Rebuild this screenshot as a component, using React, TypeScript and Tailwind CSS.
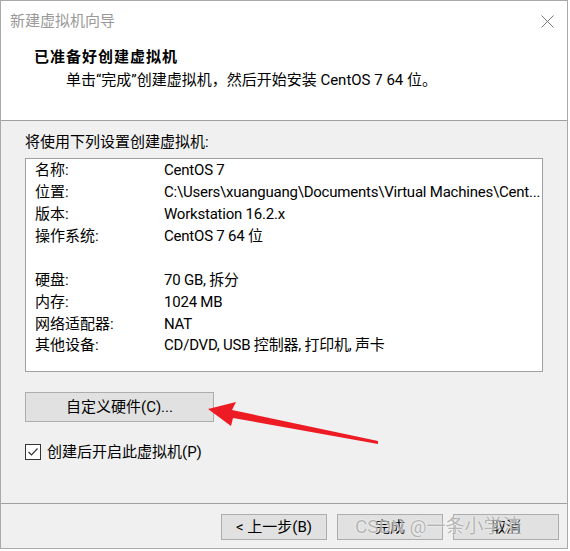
import React from "react";

const rows: [string, string][] = [
  ["名称:", "CentOS 7"],
  ["位置:", "C:\\Users\\xuanguang\\Documents\\Virtual Machines\\Cent..."],
  ["版本:", "Workstation 16.2.x"],
  ["操作系统:", "CentOS 7 64 位"],
  ["", ""],
  ["硬盘:", "70 GB, 拆分"],
  ["内存:", "1024 MB"],
  ["网络适配器:", "NAT"],
  ["其他设备:", "CD/DVD, USB 控制器, 打印机, 声卡"],
];

function WizardButton({ children }: { children: React.ReactNode }) {
  return (
    <button className="w-[106px] h-[26px] bg-[#e1e1e1] border border-[#adadad] text-[15px] leading-none text-black flex items-center justify-center">
      {children}
    </button>
  );
}

export default function App() {
  return (
    <div className="relative w-[570px] h-[551px] bg-white overflow-hidden font-['Roboto','Noto_Sans_CJK_SC',sans-serif] text-black">
      <div className="w-[568px] h-[549px] border border-[#a9a9a9] flex flex-col bg-[#f0f0f0]">
        <div className="bg-white h-[120px] border-b border-[#a0a0a0] flex flex-col">
          <div className="h-[40px] flex items-center justify-between pl-[9px] pr-[13px]">
            <span className="text-[15px] text-[#999999]">新建虚拟机向导</span>
            <svg width="13" height="13" viewBox="0 0 13 13" className="text-[#777]">
              <path d="M0.5 0.5 L12.5 12.5 M12.5 0.5 L0.5 12.5" stroke="currentColor" strokeWidth="1" fill="none" />
            </svg>
          </div>
          <div className="pl-[33px] mt-[5px] text-[15px] font-bold tracking-[1px] leading-[22px]">已准备好创建虚拟机</div>
          <div className="pl-[65px] text-[15px] leading-[22px] mt-[1px]">
            单击“完成”创建虚拟机，然后开始安装 CentOS 7 64 位。
          </div>
        </div>

        <div className="flex-1 px-[24px] flex flex-col">
          <div className="mt-[10px] text-[15px] leading-[22px]">将使用下列设置创建虚拟机:</div>
          <div className="mt-[5px] h-[214px] bg-white border border-[#a0a0a0] pl-[9px] pt-[1px]">
            {rows.map(([k, v], i) => (
              <div key={i} className="flex h-[21.875px] items-center text-[15px] leading-none">
                <span className="w-[129px] shrink-0">{k}</span>
                <span className="whitespace-nowrap tracking-[-0.22px]">{v}</span>
              </div>
            ))}
          </div>
          <button className="mt-[20px] w-[189px] h-[30px] bg-[#e1e1e1] border border-[#adadad] text-[15px] leading-none flex items-center justify-center">
            自定义硬件(C)...
          </button>
          <label className="mt-[19px] flex items-center gap-[6px] text-[15px] leading-[22px]">
            <span className="w-[16px] h-[16px] bg-white border border-[#333] flex items-center justify-center">
              <svg width="12" height="12" viewBox="0 0 12 12">
                <path d="M1.5 6 L4.5 9 L10.5 2.5" stroke="#333" strokeWidth="1.2" fill="none" />
              </svg>
            </span>
            创建后开启此虚拟机(P)
          </label>
        </div>

        <div className="h-[45px] border-t border-[#a0a0a0] flex justify-end items-start gap-[10px] pt-[10px] pr-[8px]">
          <WizardButton>&lt; 上一步(B)</WizardButton>
          <WizardButton>完成</WizardButton>
          <WizardButton>取消</WizardButton>
        </div>
      </div>

      <svg className="absolute left-0 top-0" width="570" height="551" viewBox="0 0 570 551">
        <polygon
          points="208,409 236,402 232,410 378,441 378,444 233,418 231,426"
          fill="#ed1c24"
        />
      </svg>

      <div className="absolute left-[355px] top-[514px] text-[19px] leading-[26px] text-[#9a9a9a]/70 [text-shadow:0_0_2px_white] whitespace-nowrap">
        CSDN @一条小学渣
      </div>
    </div>
  );
}
